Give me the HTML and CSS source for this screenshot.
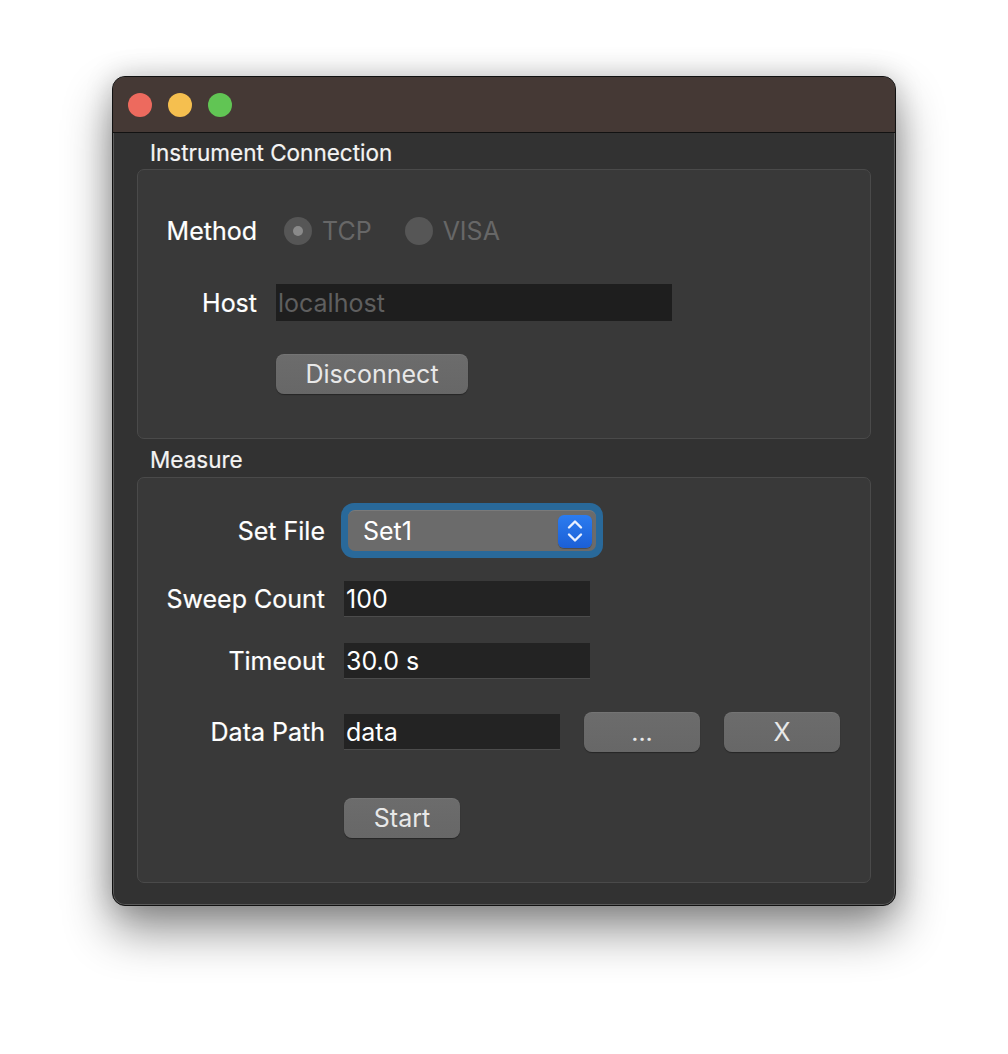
FILE: index.html
```html
<!DOCTYPE html>
<html>
<head>
<meta charset="utf-8">
<link rel="stylesheet" href="styles.css">
</head>
<body>
<div class="window">
  <div class="titlebar">
    <span class="light red"></span>
    <span class="light yellow"></span>
    <span class="light green"></span>
  </div>
  <div class="content">
    <div class="group-title">Instrument Connection</div>
    <div class="group conn">
      <div class="row method-row">
        <div class="label">Method</div>
        <div class="ctrl radios">
          <span class="radio checked"></span><span class="radio-text">TCP</span>
          <span class="radio"></span><span class="radio-text">VISA</span>
        </div>
      </div>
      <div class="row host-row">
        <div class="label">Host</div>
        <div class="ctrl"><div class="input host-input placeholder">localhost</div></div>
      </div>
      <div class="row btn-row">
        <div class="label"></div>
        <div class="ctrl"><div class="button disconnect">Disconnect</div></div>
      </div>
    </div>
    <div class="group-title second">Measure</div>
    <div class="group measure">
      <div class="row set-row">
        <div class="label">Set File</div>
        <div class="ctrl">
          <div class="select-ring">
            <div class="select">
              <span class="select-text">Set1</span>
              <span class="stepper">
                <svg width="20" height="26" viewBox="0 0 20 26"><path d="M4 9.5 L10 3.5 L16 9.5" fill="none" stroke="#e8f0ff" stroke-width="2.4" stroke-linecap="round" stroke-linejoin="round"/><path d="M4 16.5 L10 22.5 L16 16.5" fill="none" stroke="#e8f0ff" stroke-width="2.4" stroke-linecap="round" stroke-linejoin="round"/></svg>
              </span>
            </div>
          </div>
        </div>
      </div>
      <div class="row sweep-row">
        <div class="label">Sweep Count</div>
        <div class="ctrl"><div class="input field">100</div></div>
      </div>
      <div class="row timeout-row">
        <div class="label">Timeout</div>
        <div class="ctrl"><div class="input field">30.0 s</div></div>
      </div>
      <div class="row path-row">
        <div class="label">Data Path</div>
        <div class="ctrl path-ctrl">
          <div class="input path-input">data</div>
          <div class="button small">...</div>
          <div class="button small">X</div>
        </div>
      </div>
      <div class="row start-row">
        <div class="label"></div>
        <div class="ctrl"><div class="button start">Start</div></div>
      </div>
    </div>
  </div>
</div>
</body>
</html>
```

FILE: styles.css
```css
html, body {
  margin: 0;
  background: #ffffff;
}
body {
  padding: 76px 0 0 112px;
  height: 1054px;
  box-sizing: border-box;
  overflow: hidden;
  font-family: Inter, "Liberation Sans", sans-serif;
}
.window {
  width: 784px;
  height: 830px;
  box-sizing: border-box;
  border-radius: 13px;
  background: #323232;
  border: 1px solid #111;
  box-shadow: inset 0 0 0 1px #5a5a5a, 0 24px 48px rgba(0,0,0,0.45), 0 0 28px rgba(0,0,0,0.18);
  overflow: hidden;
  display: flex;
  flex-direction: column;
}
.titlebar {
  height: 55px;
  background: #453935;
  border-bottom: 1px solid #121212;
  display: flex;
  align-items: center;
  gap: 16px;
  padding-left: 15px;
  flex-shrink: 0;
}
.light {
  width: 24px;
  height: 24px;
  border-radius: 50%;
  display: block;
}
.red { background: #ed6a5e; }
.yellow { background: #f5bf4f; }
.green { background: #61c554; }

.content {
  padding: 0 24px 0 24px;
  color: #ffffff;
}
.group-title {
  font-size: 22.5px;
  height: 36px;
  line-height: 40px;
  padding-left: 13px;
  color: #f4f4f4;
  -webkit-text-stroke: 0.2px #f4f4f4;
}
.group-title.second { height: 38px; line-height: 42px; }
.group {
  background: #393939;
  border: 1px solid #4a4a4a;
  border-radius: 7px;
  box-sizing: border-box;
}
.conn {
  height: 270px;
  padding-top: 41px;
}
.measure {
  height: 406px;
  padding-top: 25px;
}
.row {
  display: grid;
  align-items: center;
  column-gap: 19px;
}
.conn .row { grid-template-columns: 119px 1fr; }
.measure .row { grid-template-columns: 187px 1fr; }
.label {
  text-align: right;
  font-size: 25px;
  color: #ffffff;
  -webkit-text-stroke: 0.2px #ffffff;
}
.ctrl {
  display: flex;
  align-items: center;
}
.method-row { height: 40px; }
.host-row { height: 37px; margin-top: 33px; }
.btn-row { height: 40px; margin-top: 33px; }

.radios { padding-left: 8px; }
.radio {
  width: 28px;
  height: 28px;
  border-radius: 50%;
  background: #565656;
  box-sizing: border-box;
  display: flex;
  align-items: center;
  justify-content: center;
  flex-shrink: 0;
}
.radio.checked::after {
  content: "";
  width: 10px;
  height: 10px;
  border-radius: 50%;
  background: #8a8a8a;
}
.radio-text {
  font-size: 25px;
  color: #676767;
  margin-left: 10px;
  margin-right: 33px;
}
.input {
  background: #232323;
  border-bottom: 1px solid #4c4c4c;
  box-sizing: border-box;
  font-size: 25px;
  color: #ffffff;
  padding-left: 2px;
  display: flex;
  align-items: center;
}
.host-input {
  width: 396px;
  height: 37px;
  background: #1e1e1e;
  border-bottom: none;
}
.placeholder { color: #5f5f5f; }
.field {
  width: 246px;
  height: 36px;
}
.button {
  background: linear-gradient(#6c6c6c, #676767);
  border-radius: 8px;
  box-shadow: 0 1px 1px rgba(0,0,0,0.35), inset 0 1px 0 rgba(255,255,255,0.06);
  color: #e8e8e8;
  font-size: 25px;
  display: flex;
  align-items: center;
  justify-content: center;
  box-sizing: border-box;
  height: 40px;
}
.disconnect { width: 192px; }
.start { width: 116px; }
.small { width: 116px; }

.set-row { height: 55px; }
.sweep-row { height: 36px; margin-top: 23px; }
.timeout-row { height: 36px; margin-top: 26px; }
.path-row { height: 40px; margin-top: 33px; }
.start-row { height: 40px; margin-top: 46px; }

.select-ring {
  margin-left: -3px;
  width: 262px;
  height: 55px;
  box-sizing: border-box;
  padding: 7px;
  border-radius: 13px;
  background: #29699a;
}
.select {
  height: 41px;
  border-radius: 7px;
  background: #6b6b6b;
  border-top: 1px solid #7a7a7a;
  box-sizing: border-box;
  display: flex;
  align-items: center;
  justify-content: space-between;
  padding: 0 4px 0 15px;
  font-size: 25px;
  color: #ffffff;
}
.stepper {
  width: 34px;
  height: 33px;
  border-radius: 6px;
  background: linear-gradient(#2b7cf0, #1b5fd6);
  box-shadow: 0 1px 1px rgba(0,0,0,0.3);
  display: flex;
  align-items: center;
  justify-content: center;
}
.path-ctrl { gap: 24px; }
.path-input {
  width: 216px;
  height: 36px;
}
```
